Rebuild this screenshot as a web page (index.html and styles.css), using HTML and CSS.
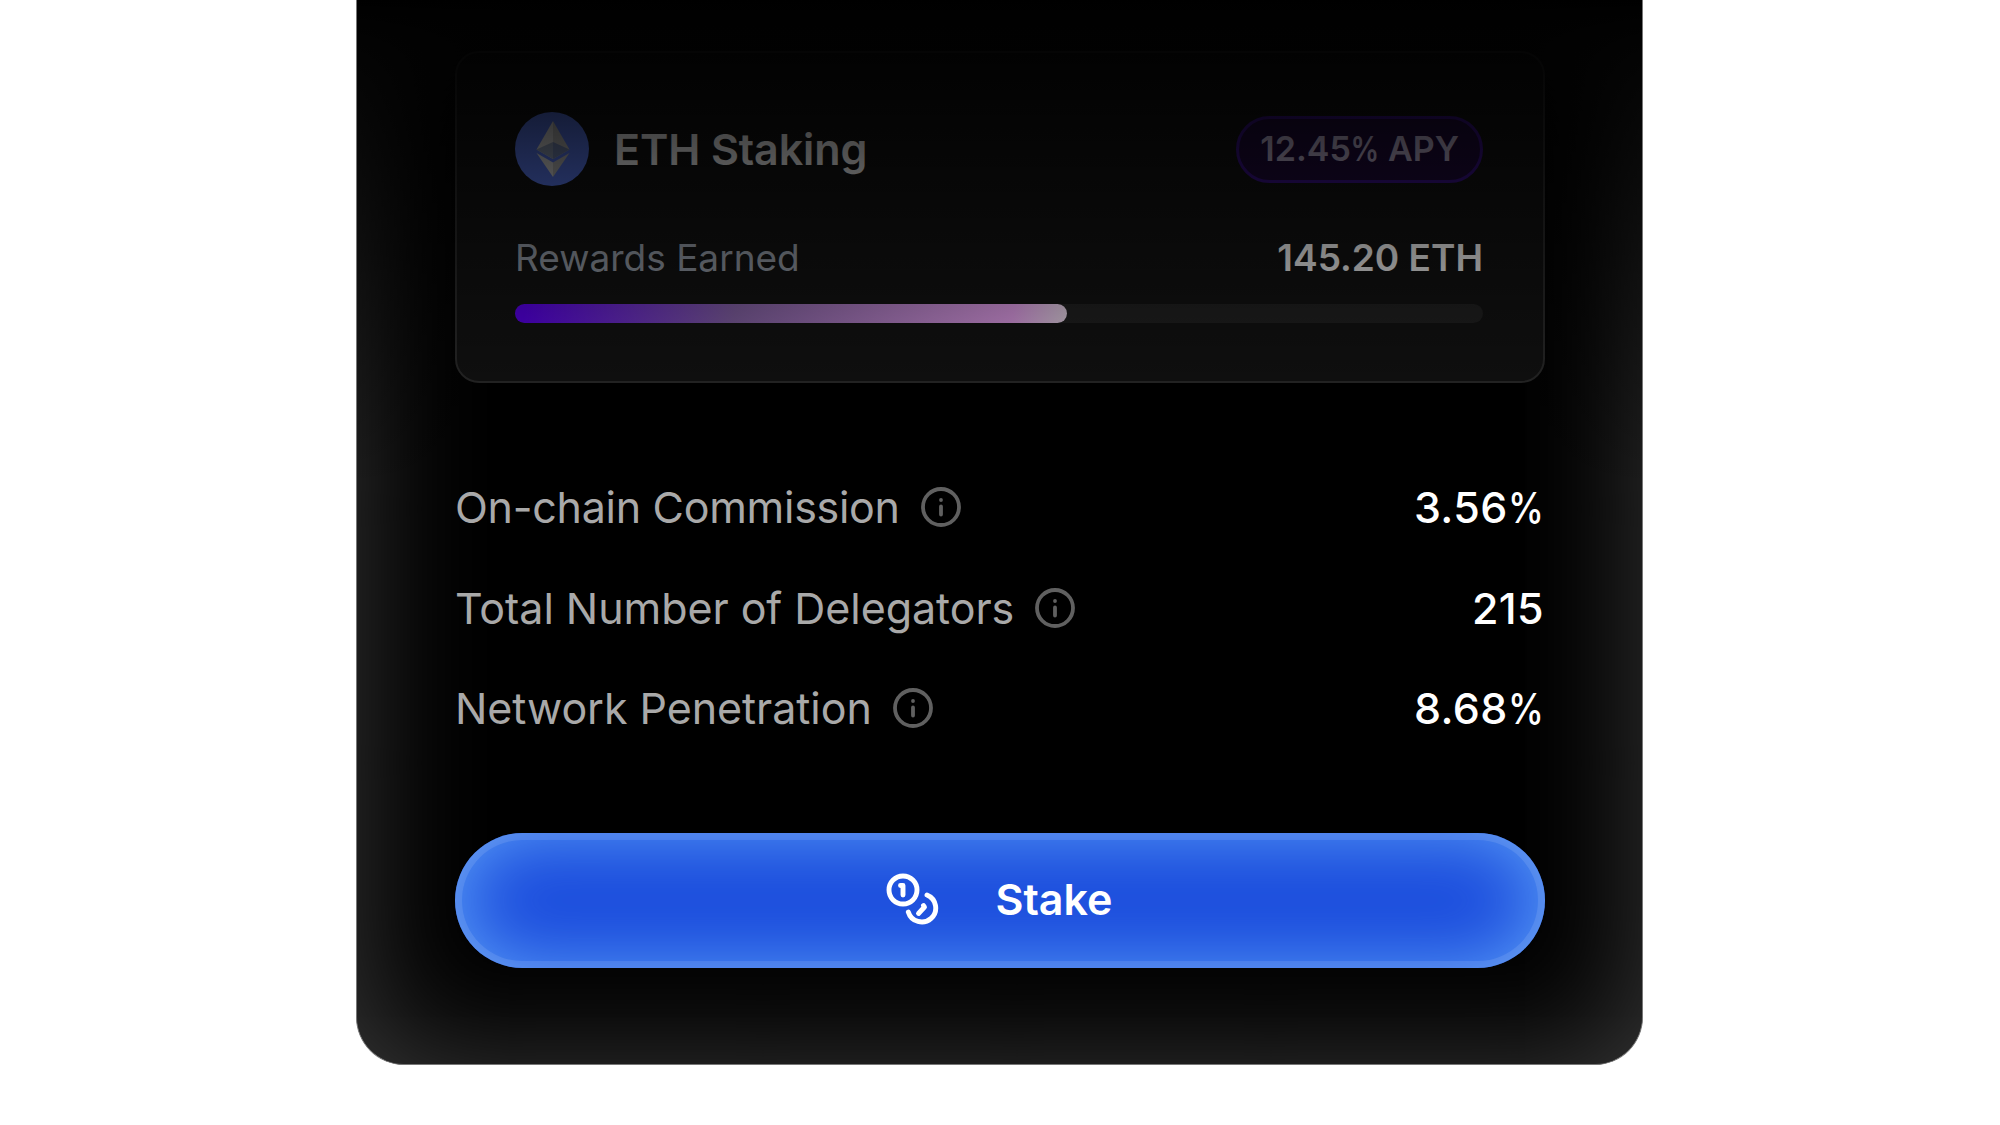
FILE: index.html
```html
<!DOCTYPE html>
<html lang="en">
<head>
    <meta charset="UTF-8">
    <meta name="viewport" content="width=device-width, initial-scale=1.0">
    <title>ETH Staking</title>
    <link rel="stylesheet" href="styles.css">
</head>
<body>
    <div class="panel">
        <div class="card">
            <div class="card-header">
                <svg class="eth-logo" viewBox="0 0 74 74">
                    <circle cx="37" cy="37" r="37" fill="#5a7af0"/>
                    <path d="M38 9L54.500 37.500L38 47z" fill="#bcbcbc"/>
                    <path d="M38 9L21.500 37.500L38 47z" fill="#dcdcdc"/>
                    <path d="M38 30L54.500 37.500L38 47z" fill="#7688b4"/>
                    <path d="M38 30L21.500 37.500L38 47z" fill="#94a2bc"/>
                    <path d="M38 50.500L54.500 41L38 65z" fill="#bcbcbc"/>
                    <path d="M38 50.500L21.500 41L38 65z" fill="#dcdcdc"/>
                </svg>
                <span class="card-title">ETH Staking</span>
                <span class="badge">12.45<span class="pct">%</span> APY</span>
            </div>
            <div class="rewards">
                <span class="rewards-label">Rewards Earned</span>
                <span class="rewards-value">145.20 ETH</span>
            </div>
            <div class="progress">
                <div class="progress-fill" style="width: 57%"></div>
            </div>
        </div>

        <div class="stats">
            <div class="stat">
                <span class="stat-label">On-chain Commission</span>
                <svg class="info" viewBox="0 0 40 40"><circle cx="20" cy="20" r="18"/><path d="M20 19.500v8M20 13v0.100"/></svg>
                <span class="stat-value">3.56<span class="pct">%</span></span>
            </div>
            <div class="stat">
                <span class="stat-label">Total Number of Delegators</span>
                <svg class="info" viewBox="0 0 40 40"><circle cx="20" cy="20" r="18"/><path d="M20 19.500v8M20 13v0.100"/></svg>
                <span class="stat-value">215</span>
            </div>
            <div class="stat">
                <span class="stat-label">Network Penetration</span>
                <svg class="info" viewBox="0 0 40 40"><circle cx="20" cy="20" r="18"/><path d="M20 19.500v8M20 13v0.100"/></svg>
                <span class="stat-value">8.68<span class="pct">%</span></span>
            </div>
        </div>

        <button class="stake">
            <svg class="coins" viewBox="0 0 54 54">
                <circle cx="18" cy="18" r="14"/>
                <path d="M42 23A14 14 0 1 1 23.300 40"/>
                <path d="M15.500 13.500h2.500v9.500"/>
                <path d="M38.500 33.500l1 1.500L33.500 41.500"/>
            </svg>
            <span>Stake</span>
        </button>
        <div class="fade"></div>
    </div>
</body>
</html>
```

FILE: styles.css
```css
* {
    box-sizing: border-box;
}
body {
    margin: 0;
    height: 1125px;
    overflow: hidden;
    background-color: #fff;
    font-family: Inter, sans-serif;
}
.panel {
    position: relative;
    width: 1287px;
    height: 1065px;
    margin: 0 0 0 356px;
    padding: 51px 97px 0 98px;
    border: 1px solid #777;
    border-top: none;
    border-radius: 0 0 48px 48px;
    background-color: #000;
    box-shadow: inset 0 0 130px rgba(255,255,255,0.23);
}
.card {
    height: 332px;
    padding: 59px 60px 0 58px;
    border: 2px solid #2b2b2b;
    border-radius: 24px;
    background-color: #131313;
}
.card-header {
    display: flex;
    align-items: center;
    height: 74px;
}
.eth-logo {
    width: 74px;
    height: 74px;
    margin-right: 25px;
}
.card-title {
    font-size: 43px;
    font-weight: 600;
    letter-spacing: -0.1px;
    color: #fff;
}
.badge {
    height: 67px;
    margin-left: auto;
    padding: 0 21px;
    border: 3px solid #3a128c;
    border-radius: 34px;
    background-color: #1f0a3c;
    color: #c4b8d8;
    font-size: 34px;
    font-weight: 600;
    line-height: 60px;
}
/* condensed percent sign */
.pct {
    display: inline-block;
    margin-left: -0.16em;
    transform: scaleX(0.84);
    transform-origin: right;
}
.rewards {
    display: flex;
    justify-content: space-between;
    margin-top: 50px;
    font-size: 37px;
    line-height: 44px;
}
.rewards-label {
    color: #9ca3af;
}
.rewards-value {
    color: #fff;
    font-weight: 600;
}
.progress {
    height: 19px;
    margin-top: 24px;
    border-radius: 10px;
    background-color: #222;
}
.progress-fill {
    height: 19px;
    border-radius: 10px;
    background: linear-gradient(100deg, #5b00f0 2%, #8764a8 40%, #e8a2f0 90%, #ecdcec);
}
.stats {
    margin-top: 74px;
}
.stat {
    display: flex;
    align-items: center;
    height: 100.5px;
    font-size: 43px;
}
.stat-label {
    color: #a9a9a9;
    letter-spacing: -0.05px;
}
.stat:first-child .stat-label {
    letter-spacing: -0.28px;
}
.info {
    width: 40px;
    height: 40px;
    margin-left: 21px;
    fill: none;
    stroke: #606060;
    stroke-width: 3.8;
    stroke-linecap: round;
}
.stat-value {
    margin-left: auto;
    padding-right: 1px;
    color: #fff;
    font-weight: 500;
    letter-spacing: 0.4px;
}
.stake {
    display: flex;
    align-items: center;
    justify-content: center;
    gap: 57px;
    width: 100%;
    height: 135px;
    margin-top: 74px;
    padding: 0 9px 2px 6px;
    border: none;
    border-radius: 68px;
    background-color: #1a4bdc;
    box-shadow: inset 0 0 0 7px rgba(255,255,255,0.1), inset 0 0 80px #60a5fa;
    color: #fff;
    font-family: inherit;
    font-size: 43px;
    font-weight: 600;
}
.coins {
    width: 54px;
    height: 54px;
    fill: none;
    stroke: #fff;
    stroke-width: 4.9;
    stroke-linecap: round;
    stroke-linejoin: round;
}
/* darkens the top of the panel */
.fade {
    position: absolute;
    top: 0;
    left: 0;
    right: 0;
    height: 487px;
    background: linear-gradient(#000, transparent);
}
```
